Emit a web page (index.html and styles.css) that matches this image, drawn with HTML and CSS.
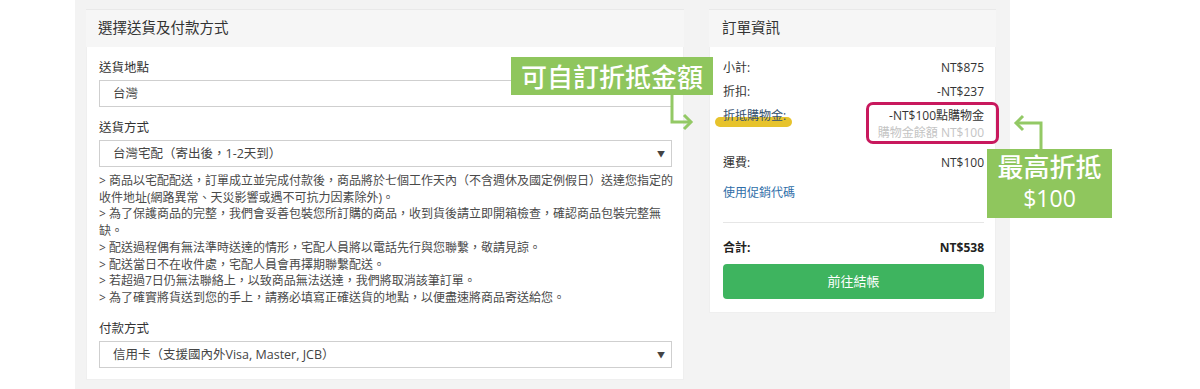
FILE: index.html
```html
<!DOCTYPE html>
<html lang="zh-Hant">
<head>
<meta charset="utf-8">
<title>結帳</title>
<link rel="stylesheet" href="styles.css">
</head>
<body>
<div class="page">
  <div class="shell">
    <section class="panel panel-left">
      <h2 class="panel-head">選擇送貨及付款方式</h2>
      <div class="panel-body form-body">
        <div class="field">
          <div class="field-label">送貨地點</div>
          <div class="control">台灣</div>
        </div>
        <div class="field">
          <div class="field-label">送貨方式</div>
          <div class="control select"><span>台灣宅配（寄出後，1-2天到）</span><span class="caret">▼</span></div>
          <div class="notes">
            <p>&gt; 商品以宅配配送，訂單成立並完成付款後，商品將於七個工作天內（不含週休及國定例假日）送達您指定的收件地址(網路異常、天災影響或遇不可抗力因素除外)。</p>
            <p>&gt; 為了保護商品的完整，我們會妥善包裝您所訂購的商品，收到貨後請立即開箱檢查，確認商品包裝完整無缺。</p>
            <p>&gt; 配送過程偶有無法準時送達的情形，宅配人員將以電話先行與您聯繫，敬請見諒。</p>
            <p>&gt; 配送當日不在收件處，宅配人員會再擇期聯繫配送。</p>
            <p>&gt; 若超過7日仍無法聯絡上，以致商品無法送達，我們將取消該筆訂單。</p>
            <p>&gt; 為了確實將貨送到您的手上，請務必填寫正確送貨的地點，以便盡速將商品寄送給您。</p>
          </div>
        </div>
        <div class="field">
          <div class="field-label">付款方式</div>
          <div class="control select"><span>信用卡（支援國內外Visa, Master, JCB）</span><span class="caret">▼</span></div>
        </div>
      </div>
    </section>

    <section class="panel panel-right">
      <h2 class="panel-head">訂單資訊</h2>
      <div class="panel-body summary-body">
        <div class="row"><span>小計:</span><span>NT$875</span></div>
        <div class="row"><span>折扣:</span><span>-NT$237</span></div>
        <div class="row"><span class="credit-label">折抵購物金:</span><span>-NT$100點購物金</span></div>
        <div class="sub-row">購物金餘額 NT$100</div>
        <div class="row row-shipping"><span>運費:</span><span>NT$100</span></div>
        <div class="promo">使用促銷代碼</div>
        <hr class="divider">
        <div class="row row-total"><span>合計:</span><span>NT$538</span></div>
        <div class="checkout">前往結帳</div>
      </div>
    </section>
  </div>

  <div class="red-frame"></div>

  <div class="callout callout-custom">可自訂折抵金額</div>
  <svg class="arrow arrow-custom" width="34" height="40" viewBox="0 0 34 40">
    <polyline points="10,2 10,29 29,29" />
    <polyline points="22,22 29,29 22,36" />
  </svg>

  <div class="callout callout-max"><span>最高折抵</span><span class="callout-num">$100</span></div>
  <svg class="arrow arrow-max" width="40" height="42" viewBox="0 0 40 42">
    <polyline points="33,39 33,13 8,13" />
    <polyline points="15,6 8,13 15,20" />
  </svg>
</div>
</body>
</html>
```

FILE: styles.css
```css
* {
  box-sizing: border-box;
}

html, body {
  margin: 0;
  padding: 0;
  background: #ffffff;
}

body {
  font-family: "Open Sans", "Noto Sans CJK TC", sans-serif;
  color: #333333;
}

.page {
  position: relative;
  width: 1200px;
  height: 389px;
  overflow: hidden;
}

.shell {
  margin-left: 75px;
  width: 935px;
  height: 389px;
  background: #f3f3f3;
  padding: 9px 14px 0 11px;
  display: flex;
  align-items: flex-start;
  gap: 25px;
}

.panel {
  display: flex;
  flex-direction: column;
}

.panel-left {
  width: 598px;
}

.panel-right {
  width: 287px;
}

.panel-head {
  margin: 0;
  height: 38px;
  border-top: 1px solid #e9e9e9;
  background: #f6f6f6;
  font-size: 14.5px;
  font-weight: 400;
  line-height: 36px;
  padding-left: 12px;
  color: #333333;
}

.panel-right .panel-head {
  padding-left: 13px;
}

.panel-body {
  background: #ffffff;
  border: 1px solid #efefef;
  border-top: none;
  position: relative;
  z-index: 0;
}

.form-body {
  padding: 12px 11px 11px 12px;
}

.field + .field {
  margin-top: 12px;
}

.field-label {
  font-size: 12.5px;
  line-height: 18px;
  margin-bottom: 3px;
  color: #333333;
}

.control {
  height: 27px;
  border: 1px solid #cfcfcf;
  padding: 0 6px 0 13px;
  font-size: 12.5px;
  line-height: 25px;
  color: #444444;
}

.select {
  display: flex;
  justify-content: space-between;
  align-items: center;
}

.caret {
  font-size: 8px;
  color: #444444;
}

.notes {
  margin-top: 6px;
  margin-right: -6px;
  font-size: 12px;
  line-height: 16.7px;
  color: #4a4a4a;
  margin-bottom: 13px;
}

.notes p {
  margin: 0;
}

.summary-body {
  padding: 11px 11px 13px 13px;
}

.row {
  display: flex;
  justify-content: space-between;
  font-size: 12px;
  line-height: 20px;
  color: #333333;
}

.row + .row {
  margin-top: 4px;
}

.credit-label {
  position: relative;
  color: #34506e;
}

.credit-label::before {
  content: "";
  position: absolute;
  left: -8px;
  top: 11px;
  width: 77px;
  height: 10px;
  border-radius: 5px;
  background: #e7c32c;
  z-index: -1;
}

.sub-row {
  text-align: right;
  font-size: 12px;
  line-height: 14px;
  color: #c4c4c4;
}

.row.row-shipping {
  margin-top: 13px;
}

.promo {
  margin-top: 10px;
  font-size: 12px;
  line-height: 20px;
  color: #2f6ea8;
}

.divider {
  margin: 19px 0 0 0;
  border: none;
  border-top: 1px solid #e6e6e6;
  height: 0;
}

.row.row-total {
  margin-top: 15px;
  font-weight: 700;
  color: #222222;
}

.checkout {
  margin-top: 6px;
  height: 35px;
  border-radius: 4px;
  background: #3eb45f;
  color: #ffffff;
  font-size: 13px;
  line-height: 35px;
  text-align: center;
}

.red-frame {
  position: absolute;
  left: 866px;
  top: 102px;
  width: 133px;
  height: 42px;
  border: 3px solid #c8185d;
  border-radius: 7px;
}

.callout {
  position: absolute;
  background: #8fc65d;
  color: #ffffff;
  font-family: "Noto Sans CJK TC", sans-serif;
  font-weight: 500;
}

.callout-custom {
  left: 511px;
  top: 57px;
  width: 202px;
  height: 38px;
  font-size: 26px;
  line-height: 38px;
  text-align: center;
  letter-spacing: 0;
}

.callout-max {
  left: 987px;
  top: 149px;
  width: 125px;
  height: 69px;
  padding-top: 1px;
  display: flex;
  flex-direction: column;
  align-items: center;
  font-size: 26px;
  line-height: 32px;
}

.callout-num {
  font-family: "Open Sans", sans-serif;
  font-weight: 400;
  font-size: 23px;
}

.arrow {
  position: absolute;
  fill: none;
  stroke: #93c965;
  stroke-width: 3;
}

.arrow-custom {
  left: 662px;
  top: 93px;
}

.arrow-max {
  left: 1008px;
  top: 110px;
}
```
